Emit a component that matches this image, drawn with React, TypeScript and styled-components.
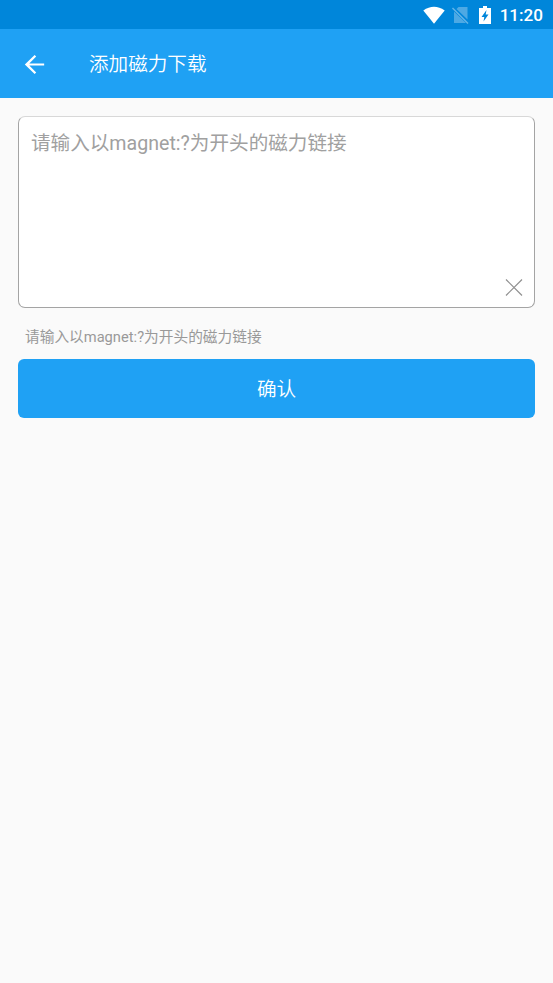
import React from "react";
import styled, { createGlobalStyle } from "styled-components";

const GlobalStyle = createGlobalStyle`
  * { box-sizing: border-box; }
  body {
    margin: 0;
    background: #fafafa;
    font-family: Roboto, "Noto Sans CJK SC", sans-serif;
  }
`;

const Screen = styled.div`
  display: flex;
  flex-direction: column;
  min-height: 983px;
  background: #fafafa;
`;

const StatusBar = styled.div`
  display: flex;
  align-items: center;
  justify-content: flex-end;
  height: 29px;
  padding-right: 10px;
  background: #0086da;
  color: #fff;
`;

const Clock = styled.span`
  margin-left: 9px;
  padding-top: 1px;
  font-size: 17.1px;
  font-weight: 500;
  line-height: 20px;
`;

const StatusIcon = styled.svg<{ $gap?: number }>`
  display: block;
  flex: none;
  margin-left: ${(p) => p.$gap ?? 0}px;
`;

const AppBar = styled.header`
  display: flex;
  align-items: center;
  height: 69px;
  padding: 2px 0 0 20px;
  background: #1fa1f4;
  color: #fff;
`;

const BackButton = styled.button`
  display: flex;
  width: 29px;
  height: 29px;
  padding: 0;
  border: 0;
  background: none;
  color: inherit;
`;

const Title = styled.h1`
  margin: 0 0 0 40px;
  padding-top: 1px;
  font-size: 19.6px;
  font-weight: 350;
  line-height: 28px;
`;

const Content = styled.main`
  display: flex;
  flex-direction: column;
  padding: 18px 18px 0;
`;

const LinkField = styled.div`
  display: flex;
  flex-direction: column;
  justify-content: space-between;
  height: 192px;
  padding: 13px 11px 10px 12px;
  border: 1px solid #a4a4a4;
  border-top-color: #d8d8d8;
  border-radius: 7px;
  background: #fff;
`;

const Placeholder = styled.span`
  color: #a0a0a0;
  font-size: 19.6px;
  line-height: 28px;
`;

const ClearButton = styled.button`
  display: flex;
  align-self: flex-end;
  padding: 0;
  border: 0;
  background: none;
`;

const Hint = styled.p`
  margin: 18px 0 11px 7px;
  color: #999;
  font-size: 14.7px;
  line-height: 22px;
`;

const ConfirmButton = styled.button`
  height: 59px;
  padding: 0 0 2px;
  border: 0;
  border-radius: 6px;
  background: #1fa1f4;
  color: #fff;
  font-family: inherit;
  font-size: 19.6px;
  font-weight: 350;
`;

export default function App() {
  return (
    <Screen>
      <GlobalStyle />
      <StatusBar>
        <StatusIcon width="22" height="18" viewBox="0 0 22 18">
          <path d="M.3 4.5Q11-3 21.7 4.5L11 17.7Z" fill="#fff" />
        </StatusIcon>
        <StatusIcon $gap={7} width="18" height="18" viewBox="0 0 18 18">
          <path d="M4.5 3 6.5 1H15.5V13.5ZM2 5.5 14 17H2Z" fill="#4da9e4" />
          <path d="M.5 2 16 17.5" stroke="#65b6e8" strokeWidth="1.4" />
        </StatusIcon>
        <StatusIcon $gap={9} width="12" height="18" viewBox="0 0 12 18">
          <path d="M4 0H8V2H12V18H0V2H4Z" fill="#fff" />
          <path d="M7.5 4 2.5 11H5.3L4.5 15.5 9.5 8.5H6.7Z" fill="#0086da" />
        </StatusIcon>
        <Clock>11:20</Clock>
      </StatusBar>
      <AppBar>
        <BackButton aria-label="返回">
          <svg width="29" height="29" viewBox="0 0 24 24">
            <path d="M20 11.1H7.7l5.7-5.7L12.1 4.1 4 12l8.1 7.9 1.3-1.3-5.7-5.7H20z" fill="currentColor" />
          </svg>
        </BackButton>
        <Title>添加磁力下载</Title>
      </AppBar>
      <Content>
        <LinkField>
          <Placeholder>请输入以magnet:?为开头的磁力链接</Placeholder>
          <ClearButton aria-label="清除">
            <svg width="18" height="18" viewBox="0 0 18 18">
              <path d="M1 .5 17 16.5M17 .5 1 16.5" stroke="#909090" strokeWidth="1.2" />
            </svg>
          </ClearButton>
        </LinkField>
        <Hint>请输入以magnet:?为开头的磁力链接</Hint>
        <ConfirmButton>确认</ConfirmButton>
      </Content>
    </Screen>
  );
}
